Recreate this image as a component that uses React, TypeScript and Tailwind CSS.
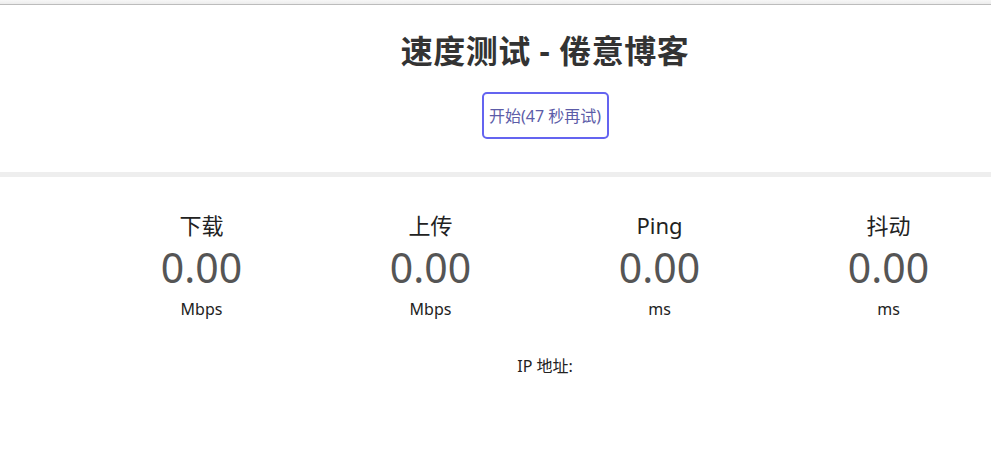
import React from "react";

interface Metric {
  label: string;
  value: string;
  unit: string;
}

const metrics: Metric[] = [
  { label: "下载", value: "0.00", unit: "Mbps" },
  { label: "上传", value: "0.00", unit: "Mbps" },
  { label: "Ping", value: "0.00", unit: "ms" },
  { label: "抖动", value: "0.00", unit: "ms" },
];

const App: React.FC = () => {
  return (
    <div className="w-full min-h-[459px] overflow-hidden bg-white font-['Noto_Sans','Noto_Sans_CJK_SC',sans-serif]">
      {/* browser-ish top strip */}
      <div className="h-[5px] bg-gradient-to-b from-[#f7f7f7] to-[#ececec] border-b border-[#bcbcbc]" />

      <div className="w-[1090px]">
        {/* header */}
        <div className="flex flex-col items-center pt-[26px]">
          <h1 className="text-[32px] leading-[40px] font-bold text-[#333] tracking-[0.5px]">
            速度测试 - 倦意博客
          </h1>
          <button className="mt-[21px] h-[47px] w-[127px] rounded-[5px] border-2 border-[#6464f0] text-[16px] text-[#5c5ca8]">
            开始(47 秒再试)
          </button>
        </div>

        {/* divider */}
        <div className="mt-[33px] h-[5px] bg-[#eeeeee]" />

        {/* metrics */}
        <div className="mt-[36px] grid grid-cols-4 w-[916px] mx-auto">
          {metrics.map((m) => (
            <div key={m.label} className="flex flex-col items-center">
              <div className="text-[22px] leading-[24px] text-[#222]">{m.label}</div>
              <div className="mt-[8px] text-[41px] leading-[44px] text-[#555]">{m.value}</div>
              <div className="mt-[10px] text-[16px] leading-[20px] text-[#222]">{m.unit}</div>
            </div>
          ))}
        </div>

        <div className="mt-[37px] text-center text-[16px] leading-[20px] text-[#222]">
          IP 地址:
        </div>
      </div>
    </div>
  );
};

export default App;
